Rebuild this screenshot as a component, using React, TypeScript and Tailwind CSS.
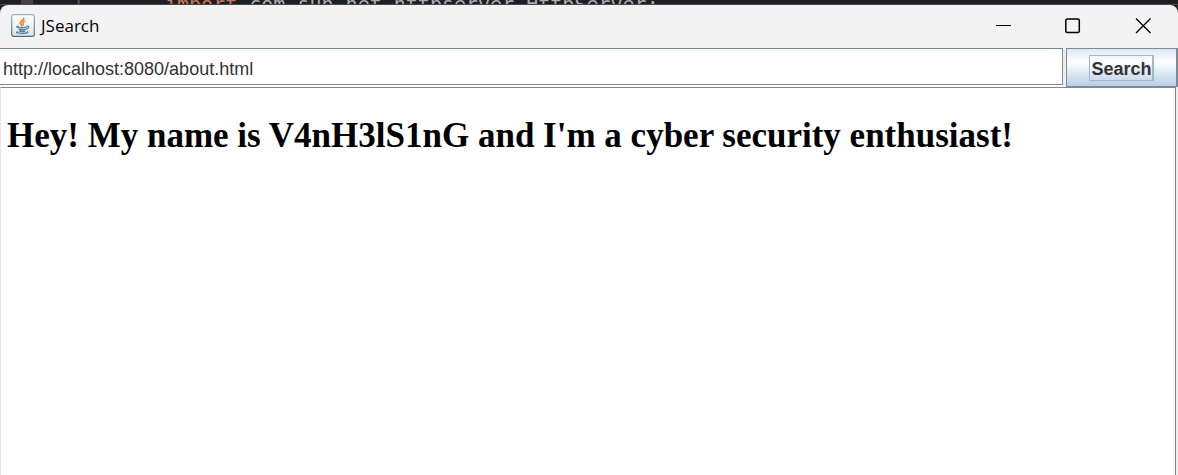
import { useState } from "react";

function JavaIcon() {
  return (
    <svg className="h-6 w-6 shrink-0" viewBox="0 0 24 24" fill="none" aria-hidden="true">
      <defs>
        <linearGradient id="tile" x1="0" y1="0" x2="0" y2="1">
          <stop offset="0" stopColor="#ffffff" />
          <stop offset="0.55" stopColor="#f0f3f5" />
          <stop offset="1" stopColor="#dbe4e9" />
        </linearGradient>
        <linearGradient id="frame" x1="0" y1="0" x2="0" y2="1">
          <stop offset="0" stopColor="#a3adb4" />
          <stop offset="1" stopColor="#456f89" />
        </linearGradient>
      </defs>
      <rect x="0.7" y="0.7" width="22.6" height="21.6" rx="2" fill="url(#tile)" stroke="url(#frame)" strokeWidth="1.2" />
      <path d="M12.600 4.400c.8 2-3.700 2.700-3.300 4.800.2 1.100 1.400 1.500 1.600 2.500" stroke="#ee8130" strokeWidth="1.800" strokeLinecap="round" />
      <path d="M13.800 7.200c-2 .8-2.500 1.700-1.700 2.600.6.700.3 1.200-.3 1.800" stroke="#ee8130" strokeWidth="1.400" strokeLinecap="round" />
      <path d="M7 12.300c-1.800.4-1.200 1.100.7 1.300 2.500.2 5 .1 7.400-.5" stroke="#54809b" strokeWidth="1.400" strokeLinecap="round" />
      <path d="M15.800 12.200c2.800-.5 2.400 2.200-.4 2.900" stroke="#54809b" strokeWidth="1.300" strokeLinecap="round" />
      <path d="M8 15.200c1 .8 4.600.8 6.200.1M8.800 17c1.200.6 3.600.6 5 .1" stroke="#54809b" strokeWidth="1.400" strokeLinecap="round" />
      <path d="M6.600 17.800c-3.100.8 1 1.700 4.700 1.600 3.700 0 6.800-.8 5.200-1.600" stroke="#54809b" strokeWidth="1.300" strokeLinecap="round" />
    </svg>
  );
}

function EditorStrip() {
  return (
    <div className="flex h-[5px] overflow-hidden border-b border-[#4b4b4d] bg-[#1e1f22] font-['DejaVu_Sans_Mono',monospace] text-[20px] leading-[24px] whitespace-pre text-[#a9abb2]">
      <div className="-mt-2 flex">
        <span className="ml-[21px] w-3 bg-[#424347]" />
        <span className="w-[132px] pl-[39px] text-[#50535a]">1</span>
        <span>
          <span className="text-[#c77752]">import</span> com.sun.net.httpserver.HttpServer;
        </span>
      </div>
    </div>
  );
}

function TitleBar() {
  return (
    <header className="flex h-[43px] items-center rounded-t-lg bg-[#f3f3f3] pb-[2px] pl-[11px]">
      <JavaIcon />
      <h1 className="ml-[6px] flex-1 font-['Open_Sans','Noto_Sans',sans-serif] text-[17px] leading-6 text-black">JSearch</h1>
      <div className="flex self-stretch text-black">
        <button type="button" aria-label="Minimize" className="flex w-[69px] items-center justify-center">
          <svg className="h-4 w-4" viewBox="0 0 16 16" stroke="currentColor" shapeRendering="crispEdges">
            <path d="M0 7.500h15" />
          </svg>
        </button>
        <button type="button" aria-label="Maximize" className="flex w-[69px] items-center justify-center">
          <svg className="h-4 w-4" viewBox="0 0 16 16" fill="none" stroke="currentColor" strokeWidth="1.500">
            <rect x="0.800" y="1" width="13.500" height="13.500" rx="1.500" />
          </svg>
        </button>
        <button type="button" aria-label="Close" className="flex w-[71px] items-center justify-center">
          <svg className="h-4 w-4" viewBox="0 0 16 16" stroke="currentColor" strokeWidth="1.300">
            <path d="M1 .5l14.500 14.500M15.500 .5L1 15" />
          </svg>
        </button>
      </div>
    </header>
  );
}

export default function App() {
  const [address, setAddress] = useState("http://localhost:8080/about.html");

  return (
    <div className="flex min-h-screen flex-col bg-[#1e1f22]">
      <EditorStrip />
      <TitleBar />
      <form className="flex bg-[#eeeeee]" onSubmit={(event) => event.preventDefault()}>
        <div className="mr-[3px] flex-1 bg-white pb-px">
          <input
            type="text"
            aria-label="Address"
            value={address}
            onChange={(event) => setAddress(event.target.value)}
            className="block h-[37px] w-full border-y border-r border-[#7a8a99] bg-white pt-[6px] pl-[3px] font-['Liberation_Sans',Arial,sans-serif] text-[18px] text-[#333333] outline-none"
          />
        </div>
        <button
          type="submit"
          className="flex h-[39px] w-28 items-center justify-center border border-r-2 border-[#7a8a99] bg-linear-to-b from-[#dde8f3] via-white via-35% to-[#b8cfe5] font-['Liberation_Sans',Arial,sans-serif] text-[18px] font-bold text-[#333333]"
        >
          <span className="flex h-[26px] items-center border border-r-2 border-[#a3b8cc] pt-[2px] pl-px leading-5">Search</span>
        </button>
      </form>
      <main className="flex flex-1 bg-[#eeeeee] pr-[2px]">
        <div className="flex-1 border-t border-r border-l border-t-[#7a8a99] border-r-[#7a8a99] border-l-[#e8e8e8] bg-white px-[6px] pt-7">
          <h2 className="font-['Liberation_Serif','Times_New_Roman',serif] text-[35px] leading-10 font-bold text-black">
            Hey! My name is V4nH3lS1nG and I'm a cyber security enthusiast!
          </h2>
        </div>
      </main>
    </div>
  );
}
